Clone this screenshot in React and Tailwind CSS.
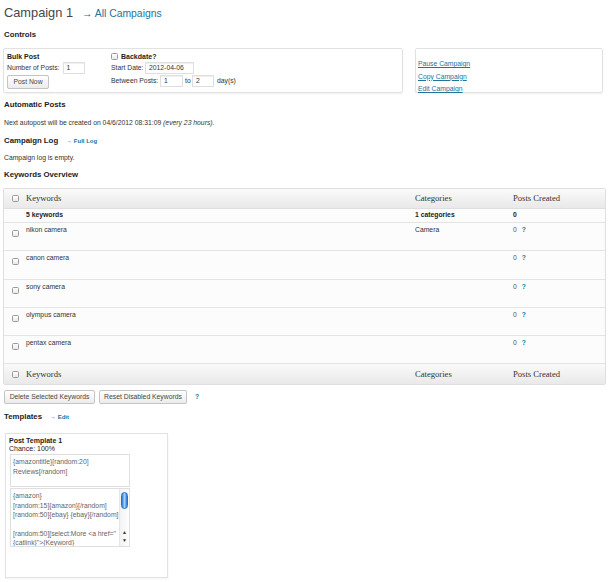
// Campaign detail screen: controls, log, keyword table and templates.
const LINK = 'text-[#21759b]';

function Check({ className = '' }) {
  return <span className={`inline-block h-[7px] w-[7px] shrink-0 rounded-[1.5px] border border-[#9a9a9a] bg-gradient-to-b from-white to-[#e9e9e9] ${className}`} />;
}

function Field({ value, className = '' }) {
  return (
    <span className={`inline-flex h-[12px] items-center border border-[#dfdfdf] bg-white pl-[3px] text-[6.8px] text-[#333] shadow-[inset_0_1px_1px_rgba(0,0,0,0.07)] ${className}`}>
      {value}
    </span>
  );
}

function Btn({ children, className = '' }) {
  return (
    <span className={`inline-flex h-[14px] items-center justify-center rounded-[2px] border border-[#c4c4c4] bg-gradient-to-b from-white to-[#ececec] text-[6.8px] text-[#464646] ${className}`}>
      {children}
    </span>
  );
}

function Heading({ children, className = '' }) {
  return <h3 className={`text-[7.8px] font-bold leading-[10px] text-[#222] ${className}`}>{children}</h3>;
}

const KEYWORDS = [
  { name: 'nikon camera', cat: 'Camera' },
  { name: 'canon camera', cat: '' },
  { name: 'sony camera', cat: '' },
  { name: 'olympus camera', cat: '' },
  { name: 'pentax camera', cat: '' },
];

const COLS = 'grid grid-cols-[22px_389px_98px_1fr]';

function HeadRow({ className = '' }) {
  return (
    <div className={`${COLS} h-[20px] items-center bg-gradient-to-b from-[#fafafa] to-[#e9e9e9] font-['Liberation_Serif',Georgia,serif] text-[8.6px] text-[#333] ${className}`}>
      <span className="flex justify-center pl-[1px]"><Check /></span>
      <span>Keywords</span>
      <span>Categories</span>
      <span>Posts Created</span>
    </div>
  );
}

export default function App() {
  return (
    <div className="min-h-[582px] w-[610px] bg-white px-[3px] pt-[3px] font-['Liberation_Sans',Arial,sans-serif] text-[6.8px] text-[#333]">
      <div className="flex h-[20px] items-baseline pl-[1px]">
        <h1 className="text-[12.8px] font-normal text-[#464646]">Campaign 1</h1>
        <span className={`ml-[9px] text-[10.4px] ${LINK}`}>→ All Campaigns</span>
      </div>

      <Heading className="mt-[7px] pl-[1px]">Controls</Heading>

      <div className="mt-[8px] flex h-[45px] gap-[12px]">
        <div className="flex w-[400px] rounded-[2px] border border-[#e2e2e2] px-[3px] pt-[3px] shadow-[0_1px_2px_rgba(0,0,0,0.06)]">
          <div className="w-[104px]">
            <div className="text-[7px] font-bold leading-[9px] text-[#222]">Bulk Post</div>
            <div className="mt-[1px] flex items-center gap-[3px] leading-[12px]">
              <span>Number of Posts:</span>
              <Field value="1" className="w-[22px]" />
            </div>
            <Btn className="mt-[1px] w-[42px]">Post Now</Btn>
          </div>
          <div>
            <div className="flex items-center gap-[3px] text-[7px] font-bold leading-[9px] text-[#222]">
              <Check /> Backdate?
            </div>
            <div className="mt-[1px] flex items-center leading-[12px]">
              <span className="w-[34px]">Start Date:</span>
              <Field value="2012-04-06" className="w-[49px]" />
            </div>
            <div className="mt-[1px] flex items-center leading-[12px]">
              <span className="w-[49px]">Between Posts:</span>
              <Field value="1" className="w-[23px]" />
              <span className="ml-[2px] w-[7px]">to</span>
              <Field value="2" className="w-[22px]" />
              <span className="ml-[3px]">day(s)</span>
            </div>
          </div>
        </div>
        <div className="flex w-[188px] flex-col rounded-[2px] border border-[#e2e2e2] pl-[2px] pt-[9px] shadow-[0_1px_2px_rgba(0,0,0,0.06)]">
          <a className={`leading-[12.5px] underline ${LINK}`}>Pause Campaign</a>
          <a className={`leading-[12.5px] underline ${LINK}`}>Copy Campaign</a>
          <a className={`leading-[12.5px] underline ${LINK}`}>Edit Campaign</a>
        </div>
      </div>

      <Heading className="mt-[7px] pl-[1px]">Automatic Posts</Heading>
      <p className="mt-[8px] pl-[1px] leading-[10px]">
        Next autopost will be created on 04/6/2012 08:31:09 <em>(every 23 hours)</em>.
      </p>

      <div className="mt-[8px] flex items-center pl-[1px]">
        <Heading>Campaign Log</Heading>
        <span className={`ml-[8px] text-[6px] font-bold ${LINK}`}>→ Full Log</span>
      </div>
      <p className="mt-[7px] pl-[1px] leading-[10px]">Campaign log is empty.</p>

      <Heading className="mt-[7px] pl-[1px]">Keywords Overview</Heading>

      <div className="mt-[8px] w-[603px] overflow-hidden rounded-[2px] border border-[#dfdfdf] bg-[#fcfcfc]">
        <HeadRow className="border-b border-[#dfdfdf]" />
        <div className={`${COLS} h-[14px] items-center border-b border-[#e4e4e4] font-bold text-[#222]`}>
          <span />
          <span>5 keywords</span>
          <span>1 categories</span>
          <span>0</span>
        </div>
        {KEYWORDS.map((k) => (
          <div key={k.name} className={`${COLS} h-[28.3px] border-b border-[#e4e4e4] pt-[2px] leading-[9px]`}>
            <span className="flex justify-center pl-[1px] pt-[5px]"><Check /></span>
            <span>{k.name}</span>
            <span>{k.cat}</span>
            <span className="flex gap-[5px] text-[#555]">0 <b className={LINK}>?</b></span>
          </div>
        ))}
        <HeadRow />
      </div>

      <div className="mt-[5px] flex items-center pl-[1px]">
        <Btn className="w-[91px]">Delete Selected Keywords</Btn>
        <Btn className="ml-[4px] w-[88px]">Reset Disabled Keywords</Btn>
        <b className={`ml-[8px] ${LINK}`}>?</b>
      </div>

      <div className="mt-[8px] flex items-center pl-[1px]">
        <Heading>Templates</Heading>
        <span className={`ml-[8px] text-[6px] font-bold ${LINK}`}>→ Edit</span>
      </div>

      <div className="ml-[2px] mt-[11px] h-[145px] w-[163px] border border-[#e2e2e2] pl-[3px] pt-[2px] shadow-[0_1px_2px_rgba(0,0,0,0.05)]">
        <div className="text-[7px] font-bold leading-[9px] text-[#222]">Post Template 1</div>
        <div className="text-[7px] leading-[8px] text-[#222]">Chance: 100%</div>
        <div className="ml-[1px] mt-[1px] h-[33px] w-[120px] border border-[#dfdfdf] bg-white px-[2px] pt-[2px] leading-[9.4px] text-[#666]">
          {'{amazontitle}[random:20]'}<br />Reviews[/random]
        </div>
        <div className="ml-[1px] mt-[1px] flex h-[59px] w-[120px] border border-[#dfdfdf] bg-white">
          <div className="flex-1 overflow-hidden whitespace-nowrap px-[2px] pt-[2px] leading-[9.3px] text-[#666]">
            {'{amazon}'}<br />
            {'[random:15]{amazon}[/random]'}<br />
            {'[random:50]{ebay} {ebay}[/random]'}<br />
            <br />
            {'[random:50][select:More <a href="'}<br />
            {'{catlink}">{Keyword}'}
          </div>
          <div className="flex w-[10px] flex-col items-center border-l border-[#e6e6e6] bg-gradient-to-r from-[#f2f2f2] to-white pt-[3px]">
            <span className="h-[17px] w-[7px] rounded-full border border-[#2a6fc4] bg-gradient-to-r from-[#2b78d6] via-[#9fd3ff] to-[#2b78d6]" />
            <span className="flex-1" />
            <span className="text-[5px] leading-[8px] text-[#333]">▲</span>
            <span className="mb-[2px] text-[5px] leading-[8px] text-[#333]">▼</span>
          </div>
        </div>
      </div>
    </div>
  );
}
